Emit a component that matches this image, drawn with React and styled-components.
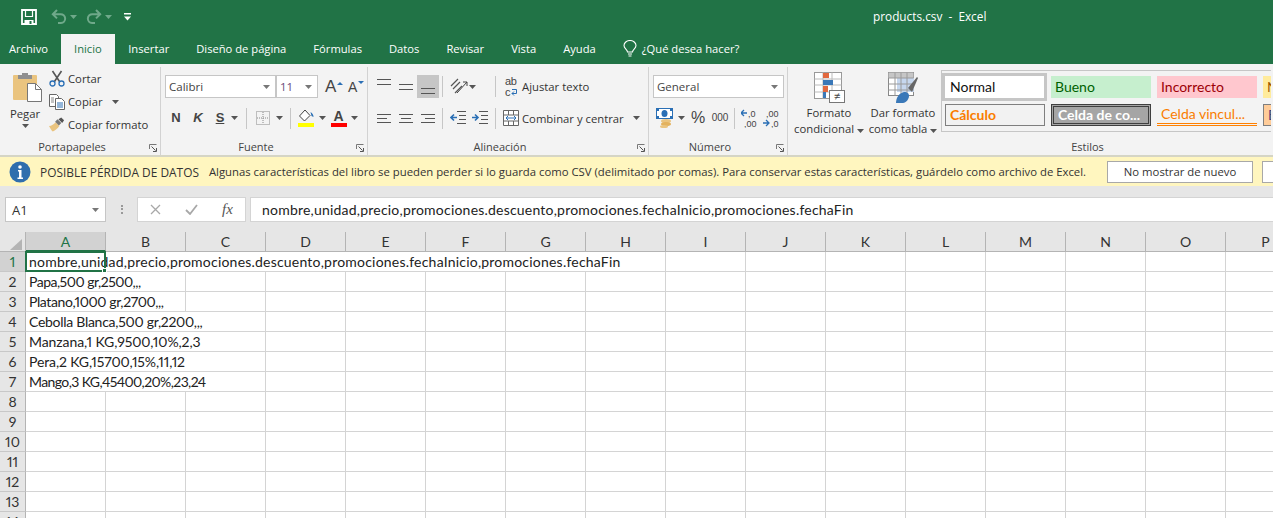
import React from 'react';
import styled, { createGlobalStyle } from 'styled-components';

const GlobalStyle = createGlobalStyle`
  html, body { margin: 0; padding: 0; background: #fff; }
  body { font-family: "Open Sans", "Noto Sans", sans-serif; }
`;

const cellFont = 'Lato, "Open Sans", sans-serif';
const green = '#217346';
const blue = '#2a6fb5';

// ---------------------------------- Icons ------------------------------------

const Caret = ({ color = '#555' }) => (
  <svg width="7" height="4" viewBox="0 0 7 4"><path d="M0 0h7L3.500 4z" fill={color} /></svg>
);

const SaveIcon = () => (
  <svg width="16" height="16" viewBox="0 0 16 16" fill="none" stroke="#fff">
    <path d="M1 1h14v14H1z" strokeWidth="1.800" />
    <path d="M4.500 1v6.500h7V1" strokeWidth="1.200" />
    <path d="M3.500 11h9v4h-9z" fill="#fff" stroke="none" />
    <path d="M8.500 12h2v3h-2z" fill="#217346" stroke="none" />
  </svg>
);

const UndoIcon = ({ flip }) => (
  <svg width="16" height="15" viewBox="0 0 16 15" style={flip ? { transform: 'scaleX(-1)' } : undefined}>
    <path d="M6 1 1.800 5.200 6 9.400M2.500 5.200h7a4 4 0 0 1 .5 8.800H7" fill="none" stroke="#6fa98a" strokeWidth="2" />
  </svg>
);

const CustomizeIcon = () => (
  <svg width="7" height="8" viewBox="0 0 7 8">
    <path d="M0 .75h7" stroke="#fff" strokeWidth="1.500" />
    <path d="M0 3.500h7L3.500 7.500z" fill="#fff" />
  </svg>
);

const Bulb = () => (
  <svg width="14" height="17" viewBox="0 0 14 17" fill="none" stroke="#fff" strokeWidth="1.100">
    <path d="M4.500 12c0-2.500-3.500-3.500-3.500-6.500a6 5 0 0 1 12 0c0 3-3.500 4-3.500 6.500z" />
    <path d="M5 14h4M5.500 16h3" />
  </svg>
);

const PasteIcon = () => (
  <svg width="29" height="32" viewBox="0 0 29 32">
    <rect x="0" y="3" width="24" height="25" rx="1" fill="#eac47f" />
    <path d="M5 3h14v4H5z" fill="#8f8f8f" />
    <path d="M9 1h6v3H9z" fill="#8f8f8f" />
    <path d="M14.500 11.500h8l6 6v12h-14z" fill="#fff" stroke="#777" />
    <path d="M22.500 11.500v6h6" fill="none" stroke="#777" />
  </svg>
);

const ScissorsIcon = () => (
  <svg width="16" height="17" viewBox="0 0 16 17" fill="none">
    <path d="M3.500 1l7 10.500M12.500 1l-7 10.500" stroke="#555" strokeWidth="1.600" />
    <circle cx="3.500" cy="13.500" r="2.500" stroke={blue} strokeWidth="1.300" />
    <circle cx="12.500" cy="13.500" r="2.500" stroke={blue} strokeWidth="1.300" />
  </svg>
);

const CopyIcon = () => (
  <svg width="16" height="16" viewBox="0 0 16 16" fill="#fff" stroke="#666">
    <path d="M.5.500h7l2 2v10h-9z" />
    <path d="M6.500 4.500h6l3 3v8h-9z" />
    <path d="M8 9h6M8 11h6M8 13h6" stroke={blue} />
    <path d="M2 4h3M2 6h3M2 8h3" stroke="#888" />
  </svg>
);

const BrushIcon = () => (
  <svg width="17" height="15" viewBox="0 0 17 15">
    <path d="M0 9c3 0 5-2 7-4l4 4c-2 3-5 5-7 6-1-1-3-4-4-6z" fill="#eac47f" />
    <path d="M6.500 4.500 9 2l4 4-2.500 2.500z" fill="#777" />
    <path d="M10 2l3-2 3 3-2 3z" fill="#555" />
  </svg>
);

const Launcher = () => (
  <svg width="8" height="8" viewBox="0 0 8 8" fill="none" stroke="#777">
    <path d="M.5 5V.5H7.500" />
    <path d="M2.500 2.500l4 4M4 7.500h3.500V4" stroke="#555" />
  </svg>
);

const BorderIcon = () => (
  <svg width="14" height="14" viewBox="0 0 14 14" fill="none" stroke="#888" strokeDasharray="1 1">
    <path d="M.5.500h13v13H.5zM7 1v12M1 7h12" />
  </svg>
);

const FillIcon = () => (
  <svg width="17" height="18" viewBox="0 0 17 18">
    <path d="M7 1 1.500 7l5 5L12 6.500z" fill="#fff" stroke="#444" />
    <path d="M12.500 3c2 1 3 3 3 5l-2-1z" fill={blue} />
    <rect x="0" y="14" width="16" height="4" fill="#ffff00" />
  </svg>
);

// vertical alignment buttons: two full lines, 5px apart
const TwoLines = () => (
  <svg width="15" height="8" viewBox="0 0 15 8" stroke="#555">
    <path d="M0 1.500h14M0 6.500h14" />
  </svg>
);

const Lines = ({ pattern }) => {
  const middle = { left: 'M0 5.500h10', center: 'M2 5.500h10', right: 'M4 5.500h10' }[pattern];
  return (
    <svg width="15" height="11" viewBox="0 0 15 11" stroke="#555">
      <path d={`M0 1.500h14M0 9.500h14${middle}`} />
    </svg>
  );
};

const OrientIcon = () => (
  <svg width="20" height="18" viewBox="0 0 20 18" fill="none" stroke="#555">
    <path d="M2 8 9 1M4 11l7-7M6 15 13 8" strokeWidth="1.200" />
    <path d="M8 15 18 4M14 4h4v4" stroke="#444" />
  </svg>
);

const WrapArrow = () => (
  <svg width="7" height="7" viewBox="0 0 7 7" fill="none" stroke={blue}>
    <path d="M1 .5h4.500v4H1M3 2.500l-2 2 2 2" />
  </svg>
);

const IndentIcon = ({ reverse }) => (
  <svg width="16" height="14" viewBox="0 0 16 14" fill="none">
    <path d="M7 .5h9M9 4.500h7M9 8.500h7M7 12.500h9" stroke="#555" />
    {reverse
      ? <path d="M1 6.500h6M4 3.500 1 6.500l3 3" stroke={blue} strokeWidth="1.600" />
      : <path d="M0 6.500h6M3 3.500l3 3-3 3" stroke={blue} strokeWidth="1.600" />}
  </svg>
);

const MergeIcon = () => (
  <svg width="16" height="16" viewBox="0 0 16 16" fill="#fff" stroke="#666">
    <path d="M.5.500h15v15H.5z" />
    <path d="M.5 5h15M.5 11h15M5.500.5V5M10.500.5V5M5.500 11v4.500M10.500 11v4.500" />
    <path d="M3 8h10M5 6l-2 2 2 2M11 6l2 2-2 2" stroke={blue} fill="none" />
  </svg>
);

const MoneyIcon = () => (
  <svg width="17" height="20" viewBox="0 0 17 20">
    <rect x=".5" y=".5" width="16" height="10" fill="#fff" stroke={blue} />
    <ellipse cx="8.500" cy="5.500" rx="3" ry="3.500" fill={blue} />
    <path d="M1 2h2M14 2h2M1 9h2M14 9h2" stroke={blue} strokeWidth="2" />
    <ellipse cx="10" cy="13" rx="5" ry="2" fill="#eac47f" />
    <ellipse cx="10" cy="16" rx="5" ry="2" fill="#e3b25e" />
    <ellipse cx="8" cy="18.500" rx="4" ry="1.500" fill="#eac47f" />
  </svg>
);

// decimal buttons: the arrow sits on the line with the short number
const DecimalIcon = ({ more }) => (
  <svg width="17" height="19" viewBox="0 0 17 19" fontFamily="Liberation Sans" fontSize="9" fill="#444">
    {more ? (
      <>
        <path d="M0 4h6M3 1 0 4l3 3" fill="none" stroke={blue} strokeWidth="1.300" />
        <text x="7" y="8">,0</text>
        <text x="3" y="18">,00</text>
      </>
    ) : (
      <>
        <text x="3" y="8">,00</text>
        <path d="M0 14h6M3 11l3 3-3 3" fill="none" stroke={blue} strokeWidth="1.300" />
        <text x="8" y="18">,0</text>
      </>
    )}
  </svg>
);

const ConditionalIcon = () => (
  <svg width="31" height="31" viewBox="0 0 31 31">
    <rect x=".5" y=".5" width="27" height="26" fill="#fff" stroke="#999" />
    <path d="M.5 7h27M.5 13h27M.5 20h27M9 .5v26M18 .5v26" stroke="#bbb" fill="none" />
    <path d="M9 1h6v5H9zM9 14h5v6H9z" fill="#e2693f" />
    <path d="M9 8h10v5H9zM9 20h3v6H9z" fill="#3a78b8" />
    <rect x="15.500" y="18.500" width="15" height="12" fill="#fff" stroke="#777" />
    <text x="23" y="28" textAnchor="middle" fontSize="11" fill="#444" fontFamily="Liberation Sans">≠</text>
  </svg>
);

const TableIcon = () => (
  <svg width="30" height="31" viewBox="0 0 30 31">
    <rect x=".5" y=".5" width="25" height="23" fill="#fff" stroke="#888" />
    <path d="M.5 6h25V.5H.5z" fill="#c6c6c6" />
    <path d="M9 6h17v14H9z" fill="#c6d7ee" />
    <path d="M.5 6h25M.5 12h25M.5 18h25M7 .5v23M13 .5v23M19 .5v23" stroke="#9a9a9a" fill="none" />
    <path d="M20 16l9-11 1 1-6 14z" fill="#666" />
    <path d="M8 31c0-5 3-10 8-11 4 0 5 2 5 4 0 3-3 7-6 7z" fill="#3a78b8" />
  </svg>
);

const CancelIcon = () => (
  <svg width="11" height="11" viewBox="0 0 11 11" fill="none" stroke="#a8a8a8" strokeWidth="1.300"><path d="M1 1l9 9M10 1l-9 9" /></svg>
);
const CheckIcon = () => (
  <svg width="13" height="11" viewBox="0 0 13 11" fill="none" stroke="#a8a8a8" strokeWidth="1.800"><path d="M1 6l4 4 7-9" /></svg>
);

const InfoIcon = () => (
  <svg width="22" height="22" viewBox="0 0 22 22" style={{ flex: 'none' }}>
    <circle cx="11" cy="11" r="10.500" fill="#2f6ead" />
    <circle cx="11" cy="6" r="1.800" fill="#fff" />
    <path d="M9 9h3.500v7.500H14V18H8.500v-1.500H10v-6H9z" fill="#fff" />
  </svg>
);

const CornerIcon = () => (
  <svg width="12" height="11" viewBox="0 0 12 11"><path d="M12 0v11H0z" fill="#b4b4b4" /></svg>
);

// ---------------------------------- Title bar ------------------------------------

const TitleBar = styled.div`
  height: 34px;
  background: ${green};
  display: flex;
  align-items: center;
  padding-left: 21px;
  padding-bottom: 3px;
  box-sizing: border-box;
  color: #fff;
`;

const QuickAccess = styled.div`
  width: 110px;
  display: flex;
  align-items: center;
  padding-top: 2px;
  & > svg:nth-child(2) { margin-left: 14px; }
  & > svg:nth-child(3) { margin-left: 3px; }
  & > svg:nth-child(4) { margin-left: 9px; }
  & > svg:nth-child(5) { margin-left: 3px; }
  & > svg:nth-child(6) { margin-left: 12px; }
`;

const WindowTitle = styled.div`
  margin-left: 742px;
  font-size: 11.800px;
  white-space: pre;
`;

// ---------------------------------- Tabs ------------------------------------

const TabBar = styled.div`
  height: 30px;
  background: ${green};
  display: flex;
  align-items: flex-end;
  font-size: 11.200px;
`;

const Tab = styled.div`
  height: ${(p) => (p.$active ? 30 : 29)}px;
  padding: 0 ${(p) => p.$pad ?? 13.500}px 2px;
  margin-left: ${(p) => p.$left ?? 0}px;
  box-sizing: border-box;
  display: flex;
  align-items: center;
  gap: 5px;
  color: ${(p) => (p.$active ? green : '#fff')};
  background: ${(p) => (p.$active ? '#f3f3f3' : 'transparent')};
  white-space: nowrap;
`;

// ---------------------------------- Ribbon ------------------------------------

const Ribbon = styled.div`
  height: 91px;
  background: #f3f3f3;
  display: flex;
  font-size: 11.300px;
  color: #333;
  overflow: hidden;
`;

const Group = styled.div`
  width: ${(p) => p.$width}px;
  flex: none;
  box-sizing: border-box;
  height: 88px;
  margin-top: 3px;
  border-right: 1px solid ${(p) => (p.$last ? 'transparent' : '#d2d2d2')};
  display: flex;
  flex-direction: column;
  position: relative;
`;

const GroupBody = styled.div`
  height: 72px;
  flex: none;
  display: flex;
  padding-left: ${(p) => p.$left ?? 0}px;
`;

const GroupLabel = styled.div`
  text-align: center;
  font-size: 11px;
  line-height: 14px;
  margin-top: 1px;
  padding-left: ${(p) => p.$left ?? 0}px;
  padding-right: 16px;
  color: #444;
`;

const LauncherSpot = styled.div`
  position: absolute;
  right: 3px;
  bottom: 3px;
  display: flex;
`;

const PasteButton = styled.div`
  width: 44px;
  display: flex;
  flex-direction: column;
  align-items: center;
  padding-top: 5px;
  gap: 1px;
  line-height: 17px;
  & > svg:first-child { margin-left: 5px; }
  & > svg:last-child { margin-top: 1px; }
`;

const ClipColumn = styled.div`
  display: flex;
  flex-direction: column;
  padding: 3px 0 0 2px;
  gap: 6px;
`;

const ClipItem = styled.div`
  height: 17px;
  display: flex;
  align-items: center;
  gap: 3px;
  white-space: nowrap;
  & > svg:first-child { width: 16px; }
`;

const Stack = styled.div`
  display: flex;
  flex-direction: column;
  padding-top: 8px;
  gap: 8px;
`;

const ToolRow = styled.div`
  height: ${(p) => p.$height ?? 23}px;
  display: flex;
  align-items: center;
`;

const Combo = styled.div`
  width: ${(p) => p.$width}px;
  height: 23px;
  box-sizing: border-box;
  background: #fff;
  border: 1px solid #c6c6c6;
  display: flex;
  align-items: center;
  justify-content: space-between;
  padding: 0 5px 0 3px;
  color: ${(p) => p.$color ?? '#444'};
  font-size: 11.500px;
`;

const Glyph = styled.span`
  display: inline-block;
  width: ${(p) => p.$width}px;
  margin-left: ${(p) => p.$left ?? 0}px;
  text-align: center;
  font-family: "Liberation Sans", sans-serif;
  font-size: ${(p) => p.$size ?? 14}px;
  font-weight: ${(p) => p.$weight ?? 400};
  font-style: ${(p) => (p.$italic ? 'italic' : 'normal')};
  text-decoration: ${(p) => (p.$under ? 'underline' : 'none')};
  color: #444;
  line-height: 16px;
`;

const GrowFont = styled.span`
  width: ${(p) => p.$width}px;
  font-family: "Liberation Sans", sans-serif;
  font-size: ${(p) => p.$size}px;
  color: #444;
  display: flex;
  align-items: flex-end;
  margin-left: ${(p) => p.$left ?? 0}px;
  line-height: 1;
  & > i {
    width: 0;
    height: 0;
    margin: 0 0 10px 1px;
    border-left: 3px solid transparent;
    border-right: 3px solid transparent;
    border-${(p) => (p.$up ? 'bottom' : 'top')}: 3px solid ${blue};
  }
`;

const VSep = styled.span`
  width: 1px;
  height: 21px;
  background: #c6c6c6;
  margin: 0 ${(p) => p.$r ?? 6}px 0 ${(p) => p.$l ?? 6}px;
  flex: none;
`;

const ColorA = styled.span`
  width: 17px;
  display: flex;
  flex-direction: column;
  align-items: center;
  font-family: "Liberation Sans", sans-serif;
  font-size: 14px;
  font-weight: 700;
  color: #444;
  line-height: 14px;
  &::after {
    content: '';
    width: 16px;
    height: 4px;
    background: #f00;
  }
`;

const AlignCell = styled.span`
  width: ${(p) => p.$width ?? 22}px;
  height: 23px;
  display: flex;
  align-items: ${(p) => p.$align ?? 'center'};
  justify-content: center;
  background: ${(p) => (p.$active ? '#c6c6c6' : 'transparent')};
  padding-top: ${(p) => p.$top ?? 0}px;
  padding-bottom: ${(p) => p.$bottom ?? 0}px;
  box-sizing: border-box;
`;

const WrapMark = styled.span`
  width: 17px;
  font-family: "Liberation Sans", sans-serif;
  font-size: 11px;
  line-height: 11px;
  color: #444;
  letter-spacing: -.3px;
  & > svg { margin-left: 1px; }
`;

const Spaced = styled.span`
  display: inline-flex;
  white-space: nowrap;
  margin-left: ${(p) => p.$left ?? 0}px;
  margin-right: ${(p) => p.$right ?? 0}px;
`;

const LargeButton = styled.div`
  width: ${(p) => p.$width}px;
  flex: none;
  display: flex;
  flex-direction: column;
  align-items: center;
  padding-top: 5px;
  line-height: 16px;
  text-align: center;
  white-space: nowrap;
  & > svg { margin-bottom: 2px; }
`;

const Gallery = styled.div`
  flex: 1;
  height: 62px;
  margin: 3px 0 0 5px;
  border: 1px solid #c6c6c6;
  border-right: none;
  display: grid;
  grid-template-columns: repeat(4, 100px);
  grid-template-rows: 28px 22px;
  column-gap: 6px;
  row-gap: 3px;
  padding: 2px 0 0 3px;
  box-sizing: border-box;
  overflow: hidden;
  font-family: ${cellFont};
  font-size: 14px;
`;

const StyleChip = styled.div`
  height: 22px;
  box-sizing: border-box;
  display: flex;
  align-items: center;
  padding: 0 0 1px 4px;
  white-space: nowrap;
  overflow: hidden;
  align-self: center;
  background: ${(p) => p.$bg ?? 'transparent'};
  color: ${(p) => p.$color ?? '#000'};
  border: ${(p) => p.$border ?? 'none'};
  border-bottom: ${(p) => p.$under ?? ''};
  font-weight: ${(p) => p.$weight ?? 400};
`;

const NormalChip = styled(StyleChip)`
  height: 28px;
  width: 105px;
  margin-left: -3px;
  padding-left: 5px;
  background: #fff;
  border: 3px solid #c6c6c6;
`;

// ---------------------------------- Notice bar ------------------------------------

const Notice = styled.div`
  height: 29px;
  border-top: 2px solid #d5d5c5;
  background: #fff6bf;
  display: flex;
  align-items: center;
  padding-left: 9px;
  font-size: 11.330px;
  color: #333;
  white-space: nowrap;
  overflow: hidden;
`;

const NoticeTitle = styled.span`
  margin-left: 9px;
  margin-right: 10px;
  font-size: 11.900px;
`;

const NoticeButton = styled.div`
  flex: none;
  width: ${(p) => p.$width}px;
  height: 22px;
  box-sizing: border-box;
  background: #fff;
  border: 1px solid #a8a8a8;
  display: flex;
  align-items: center;
  justify-content: center;
  margin-left: ${(p) => p.$left}px;
`;

// ---------------------------------- Formula bar ------------------------------------

const FormulaBar = styled.div`
  height: 46px;
  background: #e6e6e6;
  display: flex;
  padding-top: 11px;
  box-sizing: border-box;
`;

const NameBox = styled.div`
  width: 101px;
  height: 25px;
  margin-left: 5px;
  box-sizing: border-box;
  background: #fff;
  border: 1px solid #c6c6c6;
  display: flex;
  align-items: center;
  justify-content: space-between;
  padding: 0 6px;
  font-size: 13px;
  color: #333;
`;

const Grip = styled.div`
  width: 31px;
  height: 25px;
  display: flex;
  align-items: center;
  justify-content: center;
  &::before {
    content: '';
    height: 9px;
    border-left: 2px dotted #999;
  }
`;

const FormulaButtons = styled.div`
  width: 109px;
  height: 25px;
  box-sizing: border-box;
  background: #fff;
  border: 1px solid #d4d4d4;
  display: flex;
  align-items: center;
  padding-left: 12px;
  gap: 24px;
`;

const FxMark = styled.span`
  font-family: "Liberation Serif", serif;
  font-style: italic;
  font-size: 15px;
  color: #555;
`;

const FormulaInput = styled.div`
  flex: 1;
  height: 25px;
  margin-left: 4px;
  box-sizing: border-box;
  background: #fff;
  border: 1px solid #d4d4d4;
  border-right: none;
  display: flex;
  align-items: center;
  padding-left: 11px;
  font-family: ${cellFont};
  font-size: 14px;
  letter-spacing: .21px;
  color: #222;
  white-space: nowrap;
`;

// ---------------------------------- Sheet ------------------------------------

const Sheet = styled.div`
  display: grid;
  grid-template-columns: 26px repeat(16, 80px);
  grid-auto-rows: 20px;
  overflow: hidden;
  font-family: ${cellFont};
  font-size: 14px;
  font-variant-numeric: proportional-nums;
  color: #222;
  height: 286px;
`;

const Corner = styled.div`
  background: #e6e6e6;
  border-right: 1px solid #b4b4b4;
  border-bottom: 1px solid #b4b4b4;
  box-sizing: border-box;
  display: flex;
  align-items: flex-end;
  justify-content: flex-end;
  padding: 0 3px 1px 0;
`;

const ColHeader = styled.div`
  box-sizing: border-box;
  background: ${(p) => (p.$active ? '#d2d2d2' : '#e6e6e6')};
  color: ${(p) => (p.$active ? green : '#333')};
  border-right: 1px solid #b4b4b4;
  border-bottom: ${(p) => (p.$active ? `2px solid ${green}` : '1px solid #b4b4b4')};
  display: flex;
  align-items: center;
  justify-content: center;
`;

const RowHeader = styled.div`
  box-sizing: border-box;
  background: ${(p) => (p.$active ? '#d2d2d2' : '#e6e6e6')};
  color: ${(p) => (p.$active ? green : '#333')};
  border-right: 1px solid #b4b4b4;
  border-bottom: 1px solid #c8c8c8;
  display: flex;
  align-items: center;
  justify-content: center;
`;

const Cell = styled.div`
  grid-column: span ${(p) => p.$span ?? 1};
  box-sizing: border-box;
  border-right: 1px solid #d4d4d4;
  border-bottom: 1px solid #d4d4d4;
  padding-left: 3px;
  line-height: 20px;
  letter-spacing: ${(p) => p.$track ?? 0}px;
  white-space: nowrap;
  position: relative;
`;

const Selection = styled.div`
  position: absolute;
  left: -1px;
  top: -1px;
  width: 81px;
  height: 21px;
  box-sizing: border-box;
  border: 2px solid ${green};
  &::after {
    content: '';
    position: absolute;
    right: -3px;
    bottom: -3px;
    width: 5px;
    height: 5px;
    background: ${green};
    border: 1px solid #fff;
    box-sizing: border-box;
  }
`;

const Page = styled.div`
  width: 1273px;
  height: 518px;
  overflow: hidden;
`;

const columns = 'ABCDEFGHIJKLMNOP'.split('');

const formula = 'nombre,unidad,precio,promociones.descuento,promociones.fechaInicio,promociones.fechaFin';

// text of a row, how many columns it runs over, and tracking to fit Calibri's width
const rows = [
  [formula, 8, 0.21],
  ['Papa,500 gr,2500,,,', 2, -0.5],
  ['Platano,1000 gr,2700,,,', 2, -0.4],
  ['Cebolla Blanca,500 gr,2200,,,', 3, -0.28],
  ['Manzana,1 KG,9500,10%,2,3', 3, -0.08],
  ['Pera,2 KG,15700,15%,11,12', 3, -0.12],
  ['Mango,3 KG,45400,20%,23,24', 3, -0.6],
  ['', 1], ['', 1], ['', 1], ['', 1], ['', 1], ['', 1], ['', 1],
];

const tabs = ['Insertar', 'Diseño de página', 'Fórmulas', 'Datos', 'Revisar', 'Vista', 'Ayuda'];

const App = () => (
  <Page>
    <GlobalStyle />
    <TitleBar>
      <QuickAccess>
        <SaveIcon />
        <UndoIcon />
        <Caret color="#6fa98a" />
        <UndoIcon flip />
        <Caret color="#6fa98a" />
        <CustomizeIcon />
      </QuickAccess>
      <WindowTitle>products.csv  -  Excel</WindowTitle>
    </TitleBar>

    <TabBar>
      <Tab $pad={9}>Archivo</Tab>
      <Tab $active $pad={13} $left={4}>Inicio</Tab>
      {tabs.map((t) => <Tab key={t}>{t}</Tab>)}
      <Tab><Bulb />¿Qué desea hacer?</Tab>
    </TabBar>

    <Ribbon>
      <Group $width={161}>
        <GroupBody $left={3}>
          <PasteButton>
            <PasteIcon />
            Pegar
            <Caret />
          </PasteButton>
          <ClipColumn>
            <ClipItem><ScissorsIcon />Cortar</ClipItem>
            <ClipItem><CopyIcon />Copiar<Spaced $left={6}><Caret /></Spaced></ClipItem>
            <ClipItem><BrushIcon />Copiar formato</ClipItem>
          </ClipColumn>
        </GroupBody>
        <GroupLabel>Portapapeles</GroupLabel>
        <LauncherSpot><Launcher /></LauncherSpot>
      </Group>

      <Group $width={207}>
        <GroupBody $left={4}>
          <Stack>
            <ToolRow>
              <Combo $width={111}>Calibri<Caret color="#777" /></Combo>
              <Combo $width={42} $color="#6b4a7a">11<Caret color="#777" /></Combo>
              <GrowFont $width={23} $size={17} $left={7} $up>A<i /></GrowFont>
              <GrowFont $width={17} $size={14}>A<i /></GrowFont>
            </ToolRow>
            <ToolRow $height={24}>
              <Glyph $width={22} $weight={700} $size={13}>N</Glyph>
              <Glyph $width={22} $weight={700} $italic $size={13}>K</Glyph>
              <Glyph $width={22} $weight={700} $under $size={13}>S</Glyph>
              <Caret />
              <VSep $l={8} $r={8} />
              <Spaced $left={1}><BorderIcon /></Spaced>
              <Spaced $left={6}><Caret /></Spaced>
              <VSep $l={7} $r={7} />
              <FillIcon />
              <Spaced $left={4}><Caret /></Spaced>
              <Spaced $left={4}><ColorA>A</ColorA></Spaced>
              <Spaced $left={4}><Caret /></Spaced>
            </ToolRow>
          </Stack>
        </GroupBody>
        <GroupLabel>Fuente</GroupLabel>
        <LauncherSpot><Launcher /></LauncherSpot>
      </Group>

      <Group $width={281}>
        <GroupBody $left={5}>
          <Stack>
            <ToolRow>
              <AlignCell $align="flex-start" $top={3}><TwoLines /></AlignCell>
              <AlignCell><TwoLines /></AlignCell>
              <AlignCell $active $align="flex-end" $bottom={3}><TwoLines /></AlignCell>
              <VSep $l={3} $r={4} />
              <AlignCell $width={24}><OrientIcon /></AlignCell>
              <Spaced $left={-2}><Caret /></Spaced>
              <VSep $l={19} $r={9} />
              <WrapMark>ab<br />c<WrapArrow /></WrapMark>
              Ajustar texto
            </ToolRow>
            <ToolRow $height={24}>
              <AlignCell><Lines pattern="left" /></AlignCell>
              <AlignCell><Lines pattern="center" /></AlignCell>
              <AlignCell><Lines pattern="right" /></AlignCell>
              <VSep $l={3} $r={4} />
              <AlignCell><IndentIcon reverse /></AlignCell>
              <AlignCell><IndentIcon /></AlignCell>
              <VSep $l={4} $r={7} />
              <MergeIcon />
              <Spaced $left={3} $right={9}>Combinar y centrar</Spaced>
              <Caret />
            </ToolRow>
          </Stack>
        </GroupBody>
        <GroupLabel>Alineación</GroupLabel>
        <LauncherSpot><Launcher /></LauncherSpot>
      </Group>

      <Group $width={139}>
        <GroupBody $left={4}>
          <Stack>
            <ToolRow>
              <Combo $width={131}>General<Caret color="#777" /></Combo>
            </ToolRow>
            <ToolRow $height={24}>
              <Spaced $left={3}><MoneyIcon /></Spaced>
              <Spaced $left={5}><Caret /></Spaced>
              <Glyph $width={18} $size={16} $left={4}>%</Glyph>
              <Glyph $width={20} $size={10} $left={3}>000</Glyph>
              <VSep $l={4} $r={4} />
              <Spaced $left={2}><DecimalIcon more /></Spaced>
              <Spaced $left={5}><DecimalIcon /></Spaced>
            </ToolRow>
          </Stack>
        </GroupBody>
        <GroupLabel>Número</GroupLabel>
        <LauncherSpot><Launcher /></LauncherSpot>
      </Group>

      <Group $width={484} $last>
        <GroupBody>
          <LargeButton $width={82}>
            <ConditionalIcon />
            Formato
            <span>condicional <Caret /></span>
          </LargeButton>
          <LargeButton $width={66}>
            <TableIcon />
            Dar formato
            <span>como tabla <Caret /></span>
          </LargeButton>
          <Gallery>
            <NormalChip $color="#111">Normal</NormalChip>
            <StyleChip $bg="#c6efce" $color="#006100">Bueno</StyleChip>
            <StyleChip $bg="#ffc7ce" $color="#9c0006">Incorrecto</StyleChip>
            <StyleChip $bg="#ffeb9c" $color="#9c5700">Neutral</StyleChip>
            <StyleChip $bg="#f2f2f2" $color="#fa7d00" $border="1px solid #7f7f7f" $weight={700}>Cálculo</StyleChip>
            <StyleChip $bg="#a5a5a5" $color="#fff" $border="3px double #3f3f3f" $weight={700}>Celda de co...</StyleChip>
            <StyleChip $color="#fa7d00" $under="3px double #ff8001">Celda vincul...</StyleChip>
            <StyleChip $bg="#ffcc99" $color="#3f3f76" $border="1px solid #7f7f7f">Entrada</StyleChip>
          </Gallery>
        </GroupBody>
        <GroupLabel $left={132}>Estilos</GroupLabel>
      </Group>
    </Ribbon>

    <Notice>
      <InfoIcon />
      <NoticeTitle>POSIBLE PÉRDIDA DE DATOS</NoticeTitle>
      Algunas características del libro se pueden perder si lo guarda como CSV (delimitado por comas). Para conservar estas características, guárdelo como archivo de Excel.
      <NoticeButton $width={146} $left={21}>No mostrar de nuevo</NoticeButton>
      <NoticeButton $width={146} $left={9} />
    </Notice>

    <FormulaBar>
      <NameBox>A1<Caret color="#777" /></NameBox>
      <Grip />
      <FormulaButtons>
        <CancelIcon />
        <CheckIcon />
        <FxMark>fx</FxMark>
      </FormulaButtons>
      <FormulaInput>{formula}</FormulaInput>
    </FormulaBar>

    <Sheet>
      <Corner><CornerIcon /></Corner>
      {columns.map((c, i) => <ColHeader key={c} $active={i === 0}>{c}</ColHeader>)}
      {rows.map(([text, span, track], r) => (
        <React.Fragment key={r}>
          <RowHeader $active={r === 0}>{r + 1}</RowHeader>
          <Cell $span={span} $track={track}>
            {text}
            {r === 0 && <Selection />}
          </Cell>
          {Array.from({ length: 16 - span }, (_, i) => <Cell key={i} />)}
        </React.Fragment>
      ))}
    </Sheet>
  </Page>
);

export default App;
